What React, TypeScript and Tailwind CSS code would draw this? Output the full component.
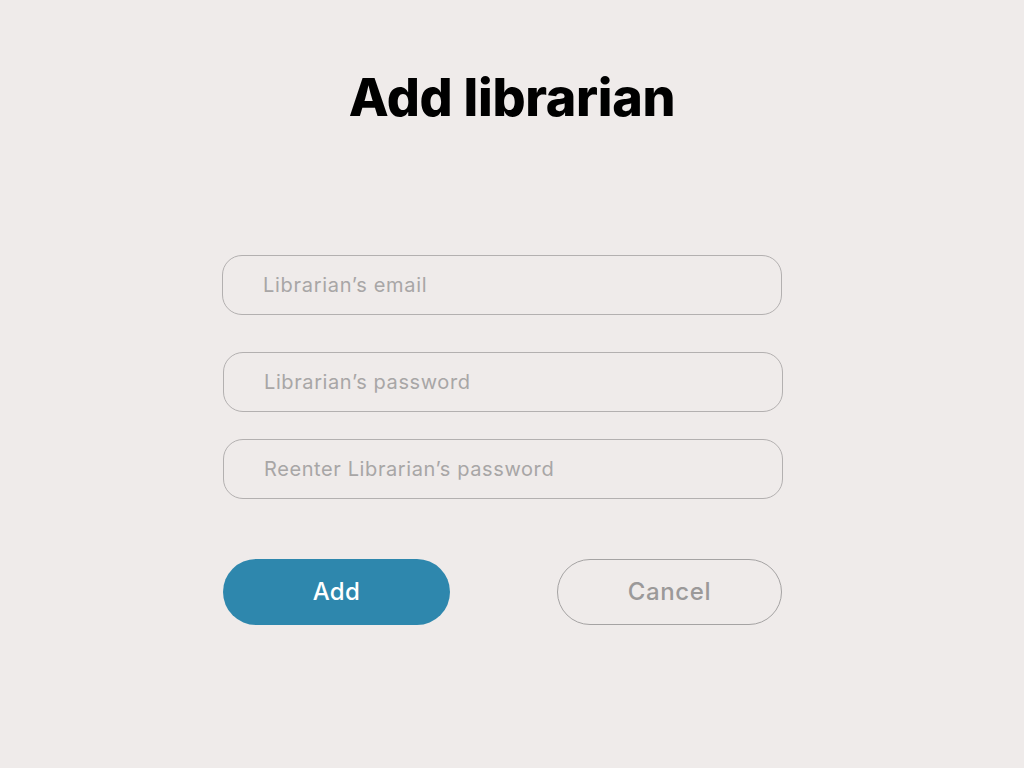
const inputs = ['Librarian’s email', 'Librarian’s password', 'Reenter Librarian’s password'];

const App = () => {
  return (
    <div
      className="min-h-[768px] w-full bg-[#efebea] pt-[67px]"
      style={{ fontFamily: 'Inter, "Noto Sans", sans-serif' }}
    >
      <h1 className="text-center text-[52px] font-extrabold leading-[62px] tracking-[-0.3px] text-black">
        Add librarian
      </h1>

      <form className="ml-[222px] mt-[126px] flex w-[560px] flex-col">
        <input
          type="email"
          placeholder={inputs[0]}
          className="h-[60px] w-full rounded-[20px] border border-[#b3b0b0] bg-transparent pl-[40px] text-[20px] tracking-[0.7px] text-[#555] outline-none placeholder:text-[#a8a6a6]"
        />
        <input
          type="password"
          placeholder={inputs[1]}
          className="ml-[1px] mt-[37px] h-[60px] w-full rounded-[20px] border border-[#b3b0b0] bg-transparent pl-[40px] text-[20px] tracking-[0.6px] text-[#555] outline-none placeholder:text-[#a8a6a6]"
        />
        <input
          type="password"
          placeholder={inputs[2]}
          className="ml-[1px] mt-[27px] h-[60px] w-full rounded-[20px] border border-[#b3b0b0] bg-transparent pl-[40px] text-[20px] tracking-[0.6px] text-[#555] outline-none placeholder:text-[#a8a6a6]"
        />

        <div className="ml-[1px] mt-[60px] flex justify-between">
          <button
            type="button"
            className="h-[66px] w-[227px] rounded-[33px] bg-[#2e87ad] text-[24px] font-medium tracking-[0.4px] text-white"
          >
            Add
          </button>
          <button
            type="button"
            className="h-[66px] w-[225px] rounded-[33px] border border-[#a5a3a3] bg-transparent text-[24px] font-medium tracking-[0.6px] text-[#9b9999]"
          >
            Cancel
          </button>
        </div>
      </form>
    </div>
  );
};

export default App;
